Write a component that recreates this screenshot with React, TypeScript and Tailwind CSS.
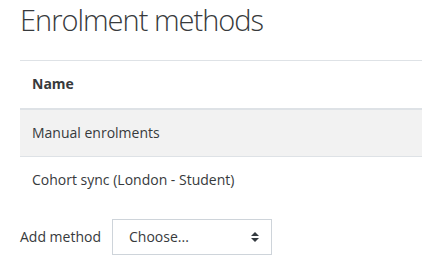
export default function App() {
  return (
    <div
      className="w-[422px] h-[277px] overflow-hidden bg-white pl-[20px] text-[#373a3c]"
      style={{ fontFamily: '"Open Sans", "Noto Sans", sans-serif' }}
    >
      <h2 className="pt-[2px] h-[60px] text-[29px] leading-[36px] font-light tracking-[-1px]">
        Enrolment methods
      </h2>

      <table className="w-[402px] border-collapse text-[14px] leading-[22.5px]">
        <thead>
          <tr className="border-t border-b-2 border-[#dee2e6]">
            <th className="px-3 py-3 text-left font-bold">Name</th>
          </tr>
        </thead>
        <tbody>
          <tr className="bg-[#f2f2f2] border-b border-[#dee2e6]">
            <td className="px-3 py-3">Manual enrolments</td>
          </tr>
          <tr>
            <td className="px-3 py-3">Cohort sync (London - Student)</td>
          </tr>
        </tbody>
      </table>

      <div className="mt-[15px] flex items-center gap-[11px] text-[14px]">
        <span className="w-[81px]">Add method</span>
        <div className="relative w-[160px] h-[36px] border border-[#ced4da] flex items-center pl-[16px]">
          <span>Choose...</span>
          <svg
            className="absolute right-[12px] top-1/2 -translate-y-1/2"
            width="8"
            height="10"
            viewBox="0 0 4 5"
          >
            <path d="M2 0L0 2h4zm0 5L0 3h4z" fill="#343a40" />
          </svg>
        </div>
      </div>
    </div>
  );
}
